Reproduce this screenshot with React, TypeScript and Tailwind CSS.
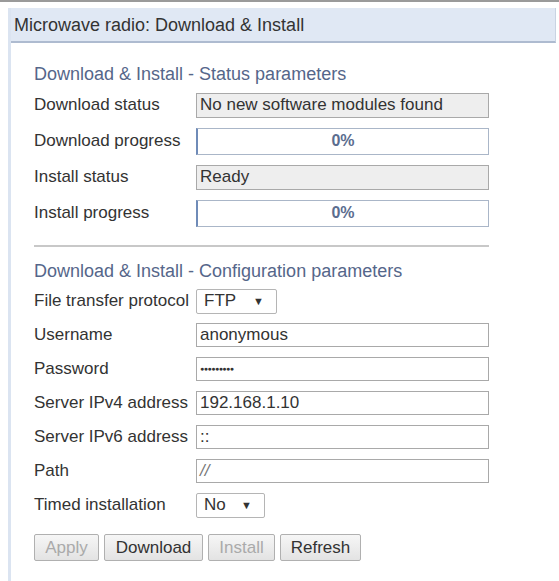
import { ReactNode } from 'react'

const font = { fontFamily: '"Liberation Sans", Arial, sans-serif' }

function Row({ label, children, h = 'h-[24px]' }: { label: string; children: ReactNode; h?: string }) {
  return (
    <div className={`flex items-center ${h}`}>
      <div className="w-[162px] shrink-0 text-[#333] whitespace-nowrap">{label}</div>
      {children}
    </div>
  )
}

function ReadOnly({ value }: { value: string }) {
  return (
    <div className="w-[293px] h-[25px] bg-[#eeeeee] border border-[#a9a9a9] px-[3px] flex items-center text-[#333]">
      {value}
    </div>
  )
}

function Progress({ value }: { value: string }) {
  return (
    <div className="w-[293px] h-[27px] bg-white border border-[#aab6c8] border-l-2 border-l-[#6f8bb8] flex items-center justify-center text-[#5b6d8f] font-bold text-[16px]">
      {value}
    </div>
  )
}

function TextInput({ value, italic }: { value: string; italic?: boolean }) {
  return (
    <div className={`w-[293px] h-[24px] bg-white border border-[#a9a9a9] px-[3px] flex items-center ${italic ? 'italic text-[#777]' : 'text-[#333]'}`}>
      {value}
    </div>
  )
}

function Select({ value, width }: { value: string; width: string }) {
  return (
    <div className={`${width} h-[25px] bg-white border border-[#b5b5b5] rounded-[2px] pl-[7px] pr-[12px] flex items-center justify-between text-[#333]`}>
      <span>{value}</span>
      <span className="text-[11px]">▼</span>
    </div>
  )
}

function Btn({ label, disabled, width }: { label: string; disabled?: boolean; width: string }) {
  return (
    <button
      className={`${width} h-[27px] border border-[#b0b0b0] rounded-[2px] bg-gradient-to-b from-[#f6f6f6] to-[#e3e3e3] flex items-center justify-center ${disabled ? 'text-[#aaaaaa]' : 'text-[#333]'}`}
    >
      {label}
    </button>
  )
}

export default function App() {
  return (
    <div className="w-[559px] h-[581px] bg-white relative overflow-hidden text-[17px]" style={font}>
      <div className="h-[2px] bg-[#9a9a9a]" />
      <div className="ml-[8px] mt-[6px] mr-[3px] border-l-[3px] border-[#dbe4f1] h-[573px]">
        <div className="h-[35px] bg-[#e0e8f4] border-b-2 border-[#aebbd0] border-r border-r-[#c9d3e2] flex items-center pt-[2px] pl-[3px] text-[#333] text-[18px]">
          Microwave radio: Download &amp; Install
        </div>

        <div className="pl-[23px] pt-[19px]">
          <div className="text-[#55668a] h-[24px] flex items-center text-[18px]">Download &amp; Install - Status parameters</div>

          <div className="flex flex-col gap-[10px] mt-[6px]">
            <Row label="Download status" h="h-[26px]"><ReadOnly value="No new software modules found" /></Row>
            <Row label="Download progress" h="h-[26px]"><Progress value="0%" /></Row>
            <Row label="Install status" h="h-[26px]"><ReadOnly value="Ready" /></Row>
            <Row label="Install progress" h="h-[26px]"><Progress value="0%" /></Row>
          </div>

          <div className="w-[455px] h-[2px] bg-[#c8c8c8] mt-[19px]" />

          <div className="text-[#55668a] h-[24px] flex items-center mt-[12px] text-[18px]">Download &amp; Install - Configuration parameters</div>

          <div className="flex flex-col gap-[10px] mt-[6px]">
            <Row label="File transfer protocol"><Select value="FTP" width="w-[81px]" /></Row>
            <Row label="Username"><TextInput value="anonymous" /></Row>
            <Row label="Password">
              <div className="w-[293px] h-[24px] bg-white border border-[#a9a9a9] px-[3px] flex items-center text-[#333] text-[7px] tracking-[-0.5px]">
                ●●●●●●●●●
              </div>
            </Row>
            <Row label="Server IPv4 address"><TextInput value="192.168.1.10" /></Row>
            <Row label="Server IPv6 address"><TextInput value="::" /></Row>
            <Row label="Path"><TextInput value="//" italic /></Row>
            <Row label="Timed installation"><Select value="No" width="w-[69px]" /></Row>
          </div>

          <div className="flex gap-[5px] mt-[17px]">
            <Btn label="Apply" disabled width="w-[65px]" />
            <Btn label="Download" width="w-[99px]" />
            <Btn label="Install" disabled width="w-[67px]" />
            <Btn label="Refresh" width="w-[81px]" />
          </div>
        </div>
      </div>
    </div>
  )
}
